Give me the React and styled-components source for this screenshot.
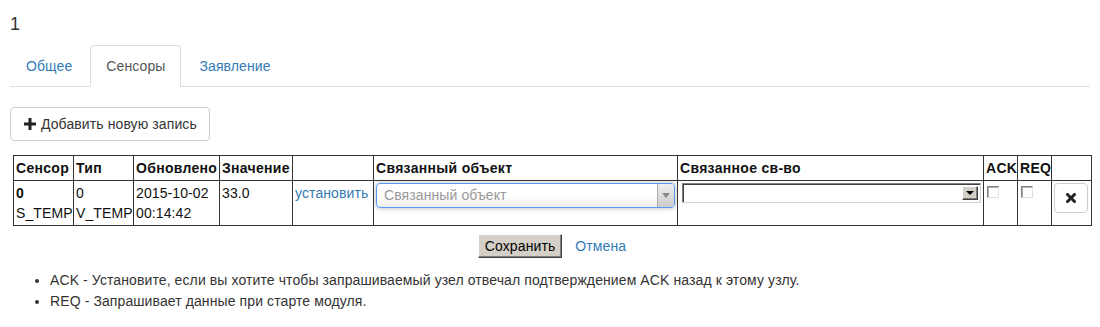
import React from "react";
import styled, { createGlobalStyle, css } from "styled-components";

const Global = createGlobalStyle`
  html, body { margin: 0; padding: 0; background: #fff; }
  body {
    font-family: "Liberation Sans", Arial, sans-serif;
    font-size: 14px;
    line-height: 20px;
    color: #333;
    letter-spacing: 0.1px;
  }
  * { box-sizing: border-box; }
`;

const Page = styled.div`
  padding: 0 10px;
  width: 1100px;
`;

const Title = styled.h4`
  margin: 14px 0 11px;
  font-size: 18px;
  font-weight: 500;
  line-height: 20px;
`;

const TabNav = styled.ul`
  display: flex;
  list-style: none;
  margin: 0;
  padding: 0;
  border-bottom: 1px solid #ddd;
`;

const TabItem = styled.li`
  margin: 0 2px -1px 0;
  a {
    display: block;
    padding: 10px 15px;
    line-height: 20px;
    border: 1px solid transparent;
    border-radius: 4px 4px 0 0;
    color: #337ab7;
    text-decoration: none;
  }
  ${(p) =>
    p.$active &&
    css`
      a {
        color: #555;
        background: #fff;
        border-color: #ddd #ddd transparent;
      }
    `}
`;

const AddButton = styled.button`
  display: inline-flex;
  align-items: center;
  gap: 5px;
  margin-top: 20px;
  padding: 6px 12px 6px 13px;
  height: 34px;
  font-family: inherit;
  font-size: 14px;
  letter-spacing: 0.1px;
  line-height: 20px;
  color: #333;
  background: #fff;
  border: 1px solid #ccc;
  border-radius: 4px;
`;

const Table = styled.table`
  margin: 14px 0 0 3px;
  width: 1079px;
  border-collapse: collapse;
  table-layout: fixed;
  color: #111;
`;

const Th = styled.th`
  border: 1px solid #333;
  padding: 2px 2px;
  text-align: left;
  font-weight: bold;
  font-size: 14px;
  line-height: 20px;
  letter-spacing: 0.3px;
  white-space: nowrap;
  overflow: hidden;
`;

const Td = styled.td`
  border: 1px solid #333;
  padding: 2px 2px;
  vertical-align: top;
  line-height: 20px;
  white-space: nowrap;
`;

const Strong = styled.b`
  font-weight: bold;
`;

const Link = styled.a`
  color: #337ab7;
  text-decoration: none;
`;

const Select2Box = styled.div`
  display: flex;
  height: 25px;
  border: 1px solid #5897fb;
  border-radius: 4px;
  box-shadow: 0 0 5px rgba(0, 0, 0, 0.3);
  background: linear-gradient(#fff 0%, #fff 50%, #eee 100%);
  overflow: hidden;
`;

const Select2Text = styled.span`
  flex: 1;
  padding-left: 7px;
  line-height: 23px;
  color: #999;
`;

const Select2Arrow = styled.span`
  width: 17px;
  border-left: 1px solid #aaa;
  background: linear-gradient(#eee, #ccc);
  display: flex;
  align-items: center;
  justify-content: center;
  &::after {
    content: "";
    border-left: 4px solid transparent;
    border-right: 4px solid transparent;
    border-top: 5px solid #888;
  }
`;

const ClassicSelect = styled.div`
  margin: 0 0 0 2px;
  height: 20px;
  display: flex;
  justify-content: flex-end;
  align-items: stretch;
  background: #fff;
  border-top: 1px solid #808080;
  border-left: 1px solid #808080;
  border-right: 1px solid #d4d0c8;
  border-bottom: 1px solid #d4d0c8;
  box-shadow: inset 1px 1px 0 #404040, inset -1px -1px 0 #fff;
  padding: 2px 2px 2px 0;
`;

const ClassicSelectButton = styled.span`
  width: 16px;
  background: #d4d0c8;
  border-top: 1px solid #fff;
  border-left: 1px solid #fff;
  border-right: 1px solid #404040;
  border-bottom: 1px solid #404040;
  box-shadow: inset -1px -1px 0 #808080;
  display: flex;
  align-items: center;
  justify-content: center;
  &::after {
    content: "";
    border-left: 4px solid transparent;
    border-right: 4px solid transparent;
    border-top: 4px solid #000;
  }
`;

const ClassicCheckbox = styled.span`
  display: block;
  margin: 3px 0 0 1px;
  width: 12px;
  height: 12px;
  background: #fff;
  border-top: 1px solid #808080;
  border-left: 1px solid #808080;
  border-right: 1px solid #e0e0e0;
  border-bottom: 1px solid #e0e0e0;
  box-shadow: inset 1px 1px 0 #b0b0b0;
`;

const IconButton = styled.button`
  display: flex;
  align-items: center;
  justify-content: center;
  width: 34px;
  height: 30px;
  padding: 0;
  background: #fff;
  border: 1px solid #ccc;
  border-radius: 4px;
`;

const Actions = styled.div`
  display: flex;
  justify-content: center;
  align-items: center;
  gap: 13px;
  margin-top: 8px;
  padding-left: 4px;
`;

const SaveButton = styled.button`
  height: 24px;
  padding: 0 6px;
  font-family: "Liberation Sans", Arial, sans-serif;
  font-size: 14px;
  letter-spacing: 0.1px;
  color: #000;
  background: #d4d0c8;
  border-top: 1px solid #fff;
  border-left: 1px solid #fff;
  border-right: 1px solid #404040;
  border-bottom: 1px solid #404040;
  box-shadow: inset -1px -1px 0 #808080;
`;

const Notes = styled.ul`
  margin: 12px 0 0;
  padding-left: 40px;
  li {
    line-height: 21px;
  }
`;

const PlusIcon = () => (
  <svg width="12" height="12" viewBox="0 0 12 12">
    <rect x="4.5" y="0" width="3" height="12" fill="#222" />
    <rect x="0" y="4.5" width="12" height="3" fill="#222" />
  </svg>
);

const RemoveIcon = () => (
  <svg width="10" height="10" viewBox="0 0 10 10">
    <path d="M1.5 1.5 L8.5 8.5 M8.5 1.5 L1.5 8.5" stroke="#222" strokeWidth="3" strokeLinecap="square" />
  </svg>
);

const cols = [60, 60, 86, 73, 81, 304, 306, 34, 34, 40];

export default function App() {
  return (
    <Page>
      <Global />
      <Title>1</Title>
      <TabNav>
        <TabItem><a href="#">Общее</a></TabItem>
        <TabItem $active><a href="#">Сенсоры</a></TabItem>
        <TabItem><a href="#">Заявление</a></TabItem>
      </TabNav>
      <AddButton>
        <PlusIcon />
        Добавить новую запись
      </AddButton>
      <Table>
        <colgroup>
          {cols.map((w, i) => (
            <col key={i} style={{ width: w }} />
          ))}
        </colgroup>
        <thead>
          <tr>
            <Th>Сенсор</Th>
            <Th>Тип</Th>
            <Th>Обновлено</Th>
            <Th>Значение</Th>
            <Th></Th>
            <Th>Связанный объект</Th>
            <Th>Связанное св-во</Th>
            <Th>ACK</Th>
            <Th>REQ</Th>
            <Th></Th>
          </tr>
        </thead>
        <tbody>
          <tr>
            <Td>
              <Strong>0</Strong>
              <br />
              S_TEMP
            </Td>
            <Td>
              0
              <br />
              V_TEMP
            </Td>
            <Td>
              2015-10-02
              <br />
              00:14:42
            </Td>
            <Td>33.0</Td>
            <Td>
              <Link href="#">установить</Link>
            </Td>
            <Td>
              <Select2Box>
                <Select2Text>Связанный объект</Select2Text>
                <Select2Arrow />
              </Select2Box>
            </Td>
            <Td>
              <ClassicSelect>
                <ClassicSelectButton />
              </ClassicSelect>
            </Td>
            <Td>
              <ClassicCheckbox />
            </Td>
            <Td>
              <ClassicCheckbox />
            </Td>
            <Td>
              <IconButton>
                <RemoveIcon />
              </IconButton>
            </Td>
          </tr>
        </tbody>
      </Table>
      <Actions>
        <SaveButton>Сохранить</SaveButton>
        <Link href="#">Отмена</Link>
      </Actions>
      <Notes>
        <li>ACK - Установите, если вы хотите чтобы запрашиваемый узел отвечал подтверждением ACK назад к этому узлу.</li>
        <li>REQ - Запрашивает данные при старте модуля.</li>
      </Notes>
    </Page>
  );
}
